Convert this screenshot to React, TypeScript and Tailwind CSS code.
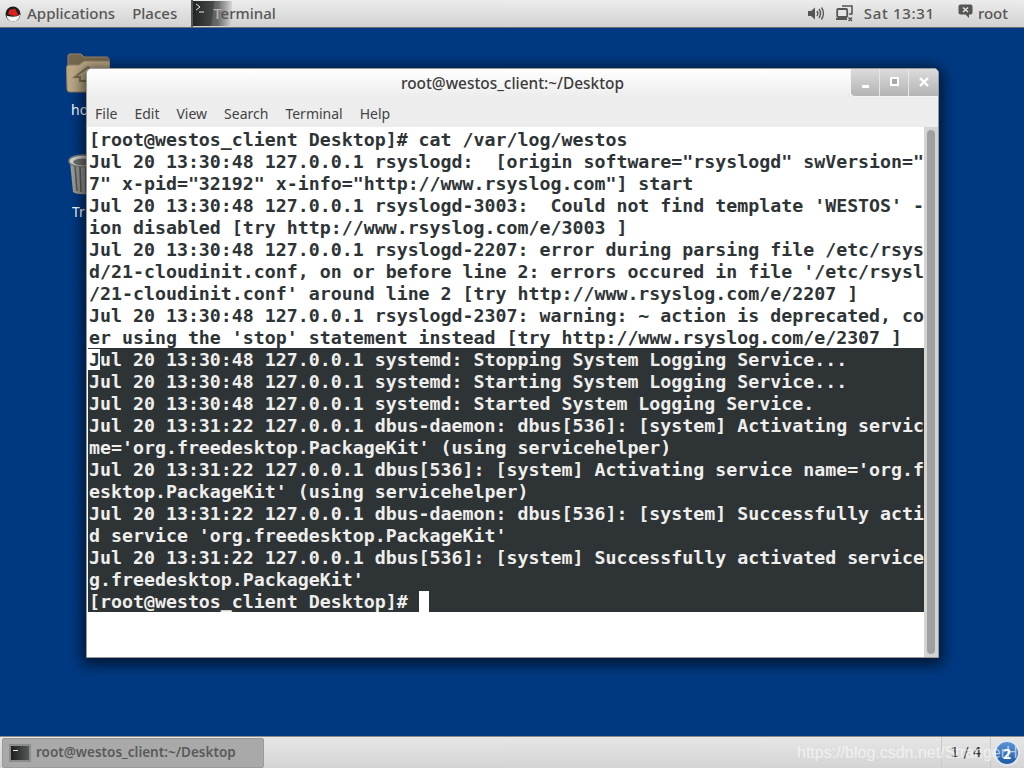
const plainLines = [
  '[root@westos_client Desktop]# cat /var/log/westos',
  'Jul 20 13:30:48 127.0.0.1 rsyslogd:  [origin software="rsyslogd" swVersion="',
  '7" x-pid="32192" x-info="http://www.rsyslog.com"] start',
  "Jul 20 13:30:48 127.0.0.1 rsyslogd-3003:  Could not find template 'WESTOS' -",
  'ion disabled [try http://www.rsyslog.com/e/3003 ]',
  'Jul 20 13:30:48 127.0.0.1 rsyslogd-2207: error during parsing file /etc/rsys',
  "d/21-cloudinit.conf, on or before line 2: errors occured in file '/etc/rsysl",
  "/21-cloudinit.conf' around line 2 [try http://www.rsyslog.com/e/2207 ]",
  'Jul 20 13:30:48 127.0.0.1 rsyslogd-2307: warning: ~ action is deprecated, co',
  "er using the 'stop' statement instead [try http://www.rsyslog.com/e/2307 ]",
];

const selectedLines = [
  'ul 20 13:30:48 127.0.0.1 systemd: Stopping System Logging Service...',
  'Jul 20 13:30:48 127.0.0.1 systemd: Starting System Logging Service...',
  'Jul 20 13:30:48 127.0.0.1 systemd: Started System Logging Service.',
  'Jul 20 13:31:22 127.0.0.1 dbus-daemon: dbus[536]: [system] Activating servic',
  "me='org.freedesktop.PackageKit' (using servicehelper)",
  "Jul 20 13:31:22 127.0.0.1 dbus[536]: [system] Activating service name='org.f",
  "esktop.PackageKit' (using servicehelper)",
  'Jul 20 13:31:22 127.0.0.1 dbus-daemon: dbus[536]: [system] Successfully acti',
  "d service 'org.freedesktop.PackageKit'",
  'Jul 20 13:31:22 127.0.0.1 dbus[536]: [system] Successfully activated service',
  "g.freedesktop.PackageKit'",
];

function RedHatLogo() {
  return (
    <svg width="16" height="16" viewBox="0 0 16 16">
      <circle cx="8" cy="8" r="7.5" fill="#1c1c1c" />
      <path d="M1.5 9.5C4 11 12 11.5 15 8.5C15 12 12 15.5 8 15.5C4.5 15.5 2.2 13 1.5 9.5Z" fill="#f4f4f4" />
      <path d="M3 7.5L4.5 4C5.5 2.5 7 3.5 8 3.2C9.5 2.5 10.5 2.6 11 4.5L12.5 7.5C13.5 8 13.5 9.5 11.5 9.8C8.5 10.2 5 9.5 3 7.5Z" fill="#d9211e" />
    </svg>
  );
}

function TerminalThumb() {
  return (
    <div className="relative h-[25px] w-[39px] bg-gradient-to-r from-[#222524] via-[#454846] to-[#d8d8d8]">
      <svg width="39" height="25" viewBox="0 0 39 25" className="absolute inset-0">
        <path d="M3 3L7 6L3 9" stroke="#e8e8e8" strokeWidth="1" fill="none" />
        <path d="M6 11H11" stroke="#e8e8e8" strokeWidth="1" />
        <path d="M18 25L22 0H27L23 25Z" fill="#6b6e6c" opacity="0.6" />
      </svg>
    </div>
  );
}

function VolumeIcon() {
  return (
    <svg width="16" height="15" viewBox="0 0 16 15" fill="none">
      <path d="M0 5H3L7 1.5V13.5L3 10H0Z" fill="#555753" />
      <path d="M9 5C10 6.5 10 8.5 9 10" stroke="#555753" strokeWidth="1.5" />
      <path d="M11 3C13 5.5 13 9.5 11 12" stroke="#555753" strokeWidth="1.5" />
      <path d="M13.5 1.5C16 5 16 10 13.5 13.5" stroke="#555753" strokeWidth="1.3" />
    </svg>
  );
}

function NetworkIcon() {
  return (
    <svg width="17" height="17" viewBox="0 0 17 17" fill="none">
      <path d="M6 1H16V9H13" stroke="#555753" strokeWidth="1.6" />
      <rect x="1.2" y="4" width="10" height="8" rx="1" fill="#e4e4e4" stroke="#555753" strokeWidth="1.8" />
      <path d="M0 15H11V13H0Z" fill="#555753" />
      <path d="M12.5 12.5L16 16M16 12.5L12.5 16" stroke="#555753" strokeWidth="1.5" />
    </svg>
  );
}

function ChatIcon() {
  return (
    <svg width="15" height="15" viewBox="0 0 15 15">
      <path d="M2.5 0.5H12.5C13.6 0.5 14.5 1.4 14.5 2.5V8.5C14.5 9.6 13.6 10.5 12.5 10.5H11V14L7.5 10.5H2.5C1.4 10.5 0.5 9.6 0.5 8.5V2.5C0.5 1.4 1.4 0.5 2.5 0.5Z" fill="#555753" />
      <path d="M5 3.5L10 8M10 3.5L5 8" stroke="#e4e4e4" strokeWidth="1.6" />
    </svg>
  );
}

function FolderIcon() {
  return (
    <svg width="44" height="40" viewBox="0 0 44 40">
      <path d="M2 3C2 1.5 3 1 4 1H15L18 4H40C42 4 43 5 43 6.5V30H2Z" fill="#75664f" stroke="#9a8763" />
      <path d="M0.5 15C0.5 13 1.5 12 3 12H13L18 8H42C43 8 44 9 44 10V36C44 38 43 39 41 39H4C2 39 1 38 1 36Z" fill="#bcaa87" stroke="#8f7f60" />
      <path d="M9 24L22 14L27 18V28H14V24Z" fill="none" stroke="#7d6e52" strokeWidth="2" />
    </svg>
  );
}

function TrashIcon() {
  return (
    <svg width="30" height="42" viewBox="0 0 30 42">
      <path d="M2 9L5 39C8 42 22 42 25 39L29 9Z" fill="#9b9d98" />
      <path d="M7 12L9 38M12 13L13 39M18 13L18 39M24 12L22 38" stroke="#5a5c58" strokeWidth="1.6" />
      <ellipse cx="15" cy="8" rx="14" ry="6" fill="#d5d6d2" stroke="#7b7d78" strokeWidth="1.5" />
      <ellipse cx="15" cy="9" rx="10" ry="3.5" fill="#70726e" />
    </svg>
  );
}

function WindowButton({ children, last }: { children: React.ReactNode; last?: boolean }) {
  return (
    <div className={`flex w-[29px] items-center justify-center ${last ? '' : 'border-r border-[#e6e6e6]'}`}>
      {children}
    </div>
  );
}

function TerminalWindow() {
  return (
    <div className="absolute left-[86px] top-[40px] flex h-[590px] w-[853px] flex-col rounded-t-[5px] border border-[#9a9a9a] bg-[#ededed] shadow-[0_3px_14px_4px_rgba(0,0,0,0.6)]">
      <div className="relative flex h-[28px] items-center justify-center rounded-t-[5px] bg-gradient-to-b from-white to-[#ededed] pt-[2px]">
        <span className="text-[15.4px] font-medium text-[#3c3c3c]">root@westos_client:~/Desktop</span>
        <div className="absolute right-0 top-0 flex h-[28px] w-[88px] rounded-bl-[5px] rounded-tr-[5px] border-b border-l border-[#f5f5f5] bg-gradient-to-b from-[#dcdcdc] to-[#b4b4b4]">
          <WindowButton>
            <span className="mt-[7px] h-[3px] w-[7px] bg-white" />
          </WindowButton>
          <WindowButton>
            <span className="mb-[2px] h-[9px] w-[9px] border-2 border-white bg-[#a8a8a8]" />
          </WindowButton>
          <WindowButton last>
            <svg width="10" height="10" viewBox="0 0 10 10" className="mb-[2px]">
              <path d="M1 1L9 9M9 1L1 9" stroke="white" strokeWidth="2.4" />
            </svg>
          </WindowButton>
        </div>
      </div>
      <div className="flex h-[30px] items-center gap-[17px] pl-[8px] pt-[2px] text-[14px] text-[#444]">
        <span>File</span>
        <span>Edit</span>
        <span>View</span>
        <span>Search</span>
        <span>Terminal</span>
        <span>Help</span>
      </div>
      <div className="flex min-h-0 flex-1">
        <div className="flex-1 bg-white pl-[1px] pt-[1px] font-['DejaVu_Sans_Mono',monospace] text-[18.25px] font-bold leading-[22px] text-[#2e3436]">
          <div>
            {plainLines.map((line) => (
              <div key={line} className="h-[22px] whitespace-pre pl-[1px] pt-[1px]">
                {line}
              </div>
            ))}
          </div>
          <div className="bg-[#2e3436] text-[#eeeeec]">
            {selectedLines.map((line, i) => (
              <div key={line} className="h-[22px] whitespace-pre pl-[1px] pt-[1px]">
                {i === 0 && <span className="-ml-[1px] bg-white pl-[1px] text-[#2e3436]">J</span>}
                {line}
              </div>
            ))}
            <div className="flex h-[22px] whitespace-pre pl-[1px] pt-[1px]">
              <span>[root@westos_client Desktop]# </span>
              <span className="w-[10px] bg-white" />
            </div>
          </div>
        </div>
        <div className="flex w-[14px] justify-center bg-[#d4d4d4] py-[3px]">
          <div className="w-[8px] rounded-full bg-[#a0a0a0]" />
        </div>
      </div>
    </div>
  );
}

export default function App() {
  return (
    <div className="flex h-screen w-[1024px] flex-col overflow-hidden font-['Noto_Sans',sans-serif]">
      <div className="flex h-[28px] shrink-0 items-center border-b border-[#6e6e6e] bg-gradient-to-b from-[#ececec] to-[#d2d2d2] text-[15px] font-medium text-[#555753]">
        <div className="ml-[5px] mr-[6px]">
          <RedHatLogo />
        </div>
        <span>Applications</span>
        <span className="ml-[17px]">Places</span>
        <div className="relative ml-[14px] flex h-full items-center border-l-2 border-[#55585a]">
          <TerminalThumb />
          <span className="absolute left-[20px]">
            <span className="text-[#b4b4b4]">T</span>erminal
          </span>
        </div>
        <div className="ml-auto flex items-center">
          <VolumeIcon />
          <div className="ml-[12px]">
            <NetworkIcon />
          </div>
          <span className="ml-[11px] tracking-[0.7px]">Sat 13:31</span>
          <div className="mb-[4px] ml-[23px]">
            <ChatIcon />
          </div>
          <span className="ml-[5px] mr-[16px]">root</span>
        </div>
      </div>

      <div className="relative flex-1 bg-[#003982]">
        <div className="absolute left-[66px] top-[25px]">
          <FolderIcon />
        </div>
        <span className="absolute left-[71px] top-[71px] text-[14px] text-white">ho</span>
        <div className="absolute left-[68px] top-[125px]">
          <TrashIcon />
        </div>
        <span className="absolute left-[72px] top-[173px] text-[14px] text-white">Tr</span>
        <TerminalWindow />
      </div>

      <div className="relative flex h-[32px] shrink-0 items-center border-t border-[#8a8a8a] bg-gradient-to-b from-[#e6e6e6] to-[#d4d4d4]">
        <div className="ml-[2px] flex h-[30px] w-[262px] items-center gap-[5px] rounded-[2px] border border-[#9a9a9a] bg-[#a9a9a9] pl-[6px] text-[13.5px] font-semibold text-[#5a5a5a]">
          <div className="flex h-[18px] w-[22px] items-center border-2 border-[#8c8c8c] bg-gradient-to-r from-[#1f2120] to-[#565a57] pl-[2px]">
            <span className="h-[6px] w-[5px] border-t border-[#e8e8e8]" />
          </div>
          root@westos_client:~/Desktop
        </div>
        <div className="ml-auto mr-[33px] flex h-[31px] w-[50px] items-center justify-center border-x border-[#cacaca] font-['DejaVu_Sans',sans-serif] text-[14px] text-[#333]">
          1 / 4
        </div>
        <div className="absolute right-[4px] top-[3px] flex h-[26px] w-[26px] items-center justify-center rounded-full border-2 border-[#dfe6ee] bg-gradient-to-b from-[#5b93d3] to-[#1d5aa6] text-[14px] font-bold text-white">
          2
        </div>
        <span className="absolute left-[797px] top-[4px] font-['Liberation_Sans',sans-serif] text-[16px] text-white/60">
          https://blog.csdn.net/StrangerH
        </span>
      </div>
    </div>
  );
}
